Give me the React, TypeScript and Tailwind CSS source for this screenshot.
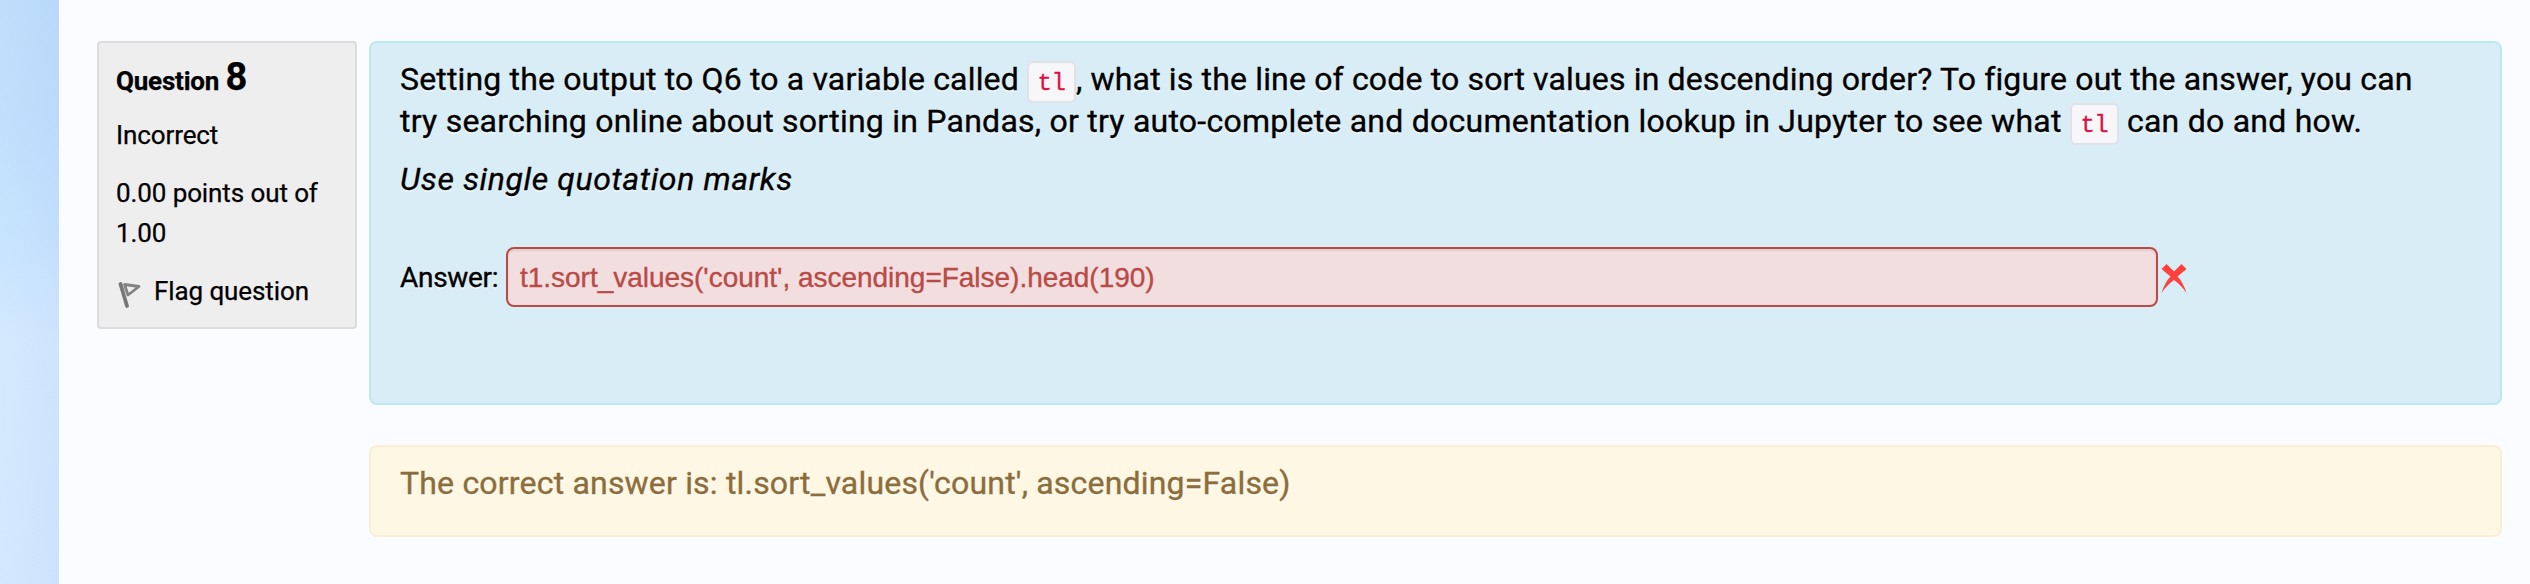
import type { ReactNode } from "react";

function Code({ children }: { children: ReactNode }) {
  return (
    <code className="inline-block h-[42px] w-[49px] rounded-[6px] border-2 border-[#e1e1e8] bg-[#f7f7f9] text-center font-['Liberation_Mono',monospace] text-[24px] leading-[42px] tracking-[-0.5px] text-[#dd1144] [-webkit-text-stroke:0.3px_currentColor]">
      {children}
    </code>
  );
}

function FlagIcon() {
  return (
    <svg className="mt-[8px] h-[30px] w-[28px] shrink-0" viewBox="0 0 28 30" fill="none">
      <path d="M4.5 5 L11 27" stroke="#777" strokeWidth="3.8" strokeLinecap="round" />
      <path d="M8.5 5.5 L23 7.5 L12 16 Z" stroke="#828282" strokeWidth="2.8" strokeLinejoin="round" />
    </svg>
  );
}

function WrongIcon() {
  return (
    <svg className="ml-[3px] mt-[17px] h-[30px] w-[27px] shrink-0" viewBox="0 0 27 30">
      <path
        d="M5.5 0 L13 7.5 L20.5 0 L25.5 5 L16.5 12.5 Q22 18 25.5 29 Q20 21 13 16 Q6 21 0.5 29 Q4 18 9.5 12.5 L0.5 5 Z"
        fill="#ff403c"
      />
    </svg>
  );
}

export default function App() {
  return (
    <div className="flex h-[584px] w-[2530px] overflow-hidden bg-[#fbfcff] font-[Roboto,sans-serif] text-black">
      <div className="w-[59px] shrink-0 bg-[linear-gradient(90deg,rgba(215,240,255,0.25),rgba(195,215,250,0.25)),linear-gradient(180deg,#b6d9fa_0%,#b9dbfc_20%,#c2e0fe_40%,#d2e8fe_58%,#d0e7fe_100%)]" />
      <div className="flex items-start pl-[38px] pt-[41px]">
        <aside className="h-[288px] w-[260px] rounded-[4px] border-2 border-[#dcdcdc] bg-[#eee] pl-[17px] text-[26px] leading-[40px] tracking-[-0.1px] [-webkit-text-stroke:0.25px_currentColor]">
          <h3 className="mt-[12px] h-[46px] whitespace-nowrap font-bold leading-[44px] tracking-[-0.2px]">
            Question <span className="text-[38px] leading-[44px]">8</span>
          </h3>
          <div className="mt-[14px]">Incorrect</div>
          <div className="mt-[18px] whitespace-nowrap">
            0.00 points out of
            <br />
            1.00
          </div>
          <div className="mt-[18px] flex whitespace-nowrap">
            <FlagIcon />
            <span className="ml-[10px]">Flag question</span>
          </div>
        </aside>
        <main className="ml-[12px] flex w-[2133px] flex-col gap-[40px]">
          <section className="h-[364px] rounded-[8px] border-2 border-[#bce8f1] bg-[#d9edf6] pl-[29px] pt-[15px] text-[32px] leading-[42px] [-webkit-text-stroke:0.35px_currentColor] [text-shadow:0_2px_0_rgba(255,255,255,0.5)]">
            <p className="whitespace-nowrap">
              <span className="block h-[42px] tracking-[0.16px]">
                Setting the output to Q6 to a variable called <Code>tl</Code>, what is the line of code to sort values in
                descending order? To figure out the answer, you can
              </span>
              <span className="block h-[42px] tracking-[0.24px]">
                try searching online about sorting in Pandas, or try auto-complete and documentation lookup in Jupyter to
                see what <Code>tl</Code> can do and how.
              </span>
            </p>
            <p className="mt-[16px] italic tracking-[0.62px]">Use single quotation marks</p>
            <div className="mt-[47px] flex">
              <label className="w-[106px] whitespace-nowrap text-[28px] leading-[62px] tracking-[-0.3px]">Answer:</label>
              <div className="h-[60px] w-[1652px] rounded-[8px] border-2 border-[#b94a48] bg-[#f2dede] pl-[12px] font-['Liberation_Sans',sans-serif] text-[28px] leading-[58px] tracking-[-0.02px] text-[#b94a48] shadow-[inset_0_2px_2px_rgba(0,0,0,0.075)] [text-shadow:none]">
                t1.sort_values('count', ascending=False).head(190)
              </div>
              <WrongIcon />
            </div>
          </section>
          <section className="h-[92px] rounded-[8px] border-2 border-[#fbeed5] bg-[#fdf7e3] pl-[29px] pt-[15px] text-[32px] leading-[42px] tracking-[0.19px] text-[#8c6d3b] [-webkit-text-stroke:0.35px_currentColor] [text-shadow:0_2px_0_rgba(255,255,255,0.5)]">
            The correct answer is: tl.sort_values('count', ascending=False)
          </section>
        </main>
      </div>
    </div>
  );
}
